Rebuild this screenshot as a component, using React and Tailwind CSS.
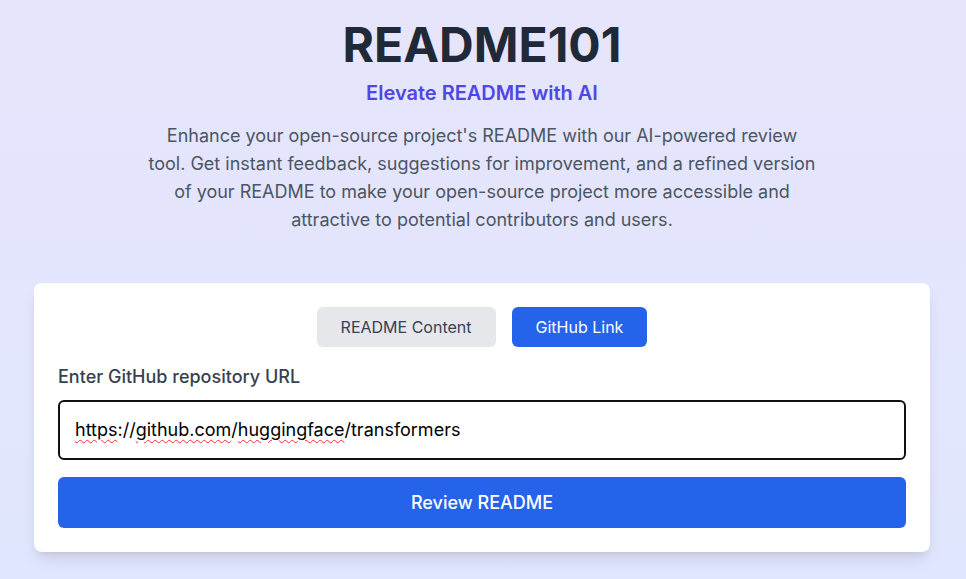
import React from "react";

export default function App() {
  return (
    <div
      className="min-h-[579px] w-full bg-gradient-to-b from-[#e6e5fc] to-[#e0e6ff] pl-[34px] pr-[36px] pt-[21px] pb-10"
      style={{ fontFamily: "Inter, 'Noto Sans', sans-serif" }}
    >
      <div className="flex flex-col items-center text-center">
        <h1 className="text-5xl leading-[48px] font-bold text-[#1f2937]">README101</h1>
        <p className="mt-[10px] text-xl leading-7 font-semibold text-[#4f46e5]">Elevate README with AI</p>
        <p className="mt-[15px] max-w-[672px] text-lg leading-7 text-[#4b5563]">
          Enhance your open-source project's README with our AI-powered review tool. Get instant feedback,
          suggestions for improvement, and a refined version of your README to make your open-source project more
          accessible and attractive to potential contributors and users.
        </p>
      </div>

      <div className="mx-auto mt-[49px] w-full max-w-[896px] rounded-lg bg-white p-6 shadow-lg">
        <div className="flex justify-center gap-4">
          <button className="h-10 rounded-md bg-[#e5e7eb] px-6 text-base text-[#374151]">README Content</button>
          <button className="h-10 rounded-md bg-[#2563eb] px-6 text-base text-white">GitHub Link</button>
        </div>
        <label className="mt-4 mb-[9px] block text-lg leading-7 font-medium text-[#374151]">
          Enter GitHub repository URL
        </label>
        <div className="flex h-[60px] items-center rounded-md border-2 border-[#111] px-[15px] text-lg text-black">
          <span className="underline decoration-wavy decoration-red-500 decoration-1 underline-offset-[3px]">https</span>
          <span>://</span>
          <span className="underline decoration-wavy decoration-red-500 decoration-1 underline-offset-[3px]">github.com</span>
          <span>/</span>
          <span className="underline decoration-wavy decoration-red-500 decoration-1 underline-offset-[3px]">huggingface</span>
          <span>/transformers</span>
        </div>
        <button className="mt-[17px] h-[51px] w-full rounded-md bg-[#2563eb] text-lg font-medium text-white">
          Review README
        </button>
      </div>
    </div>
  );
}
